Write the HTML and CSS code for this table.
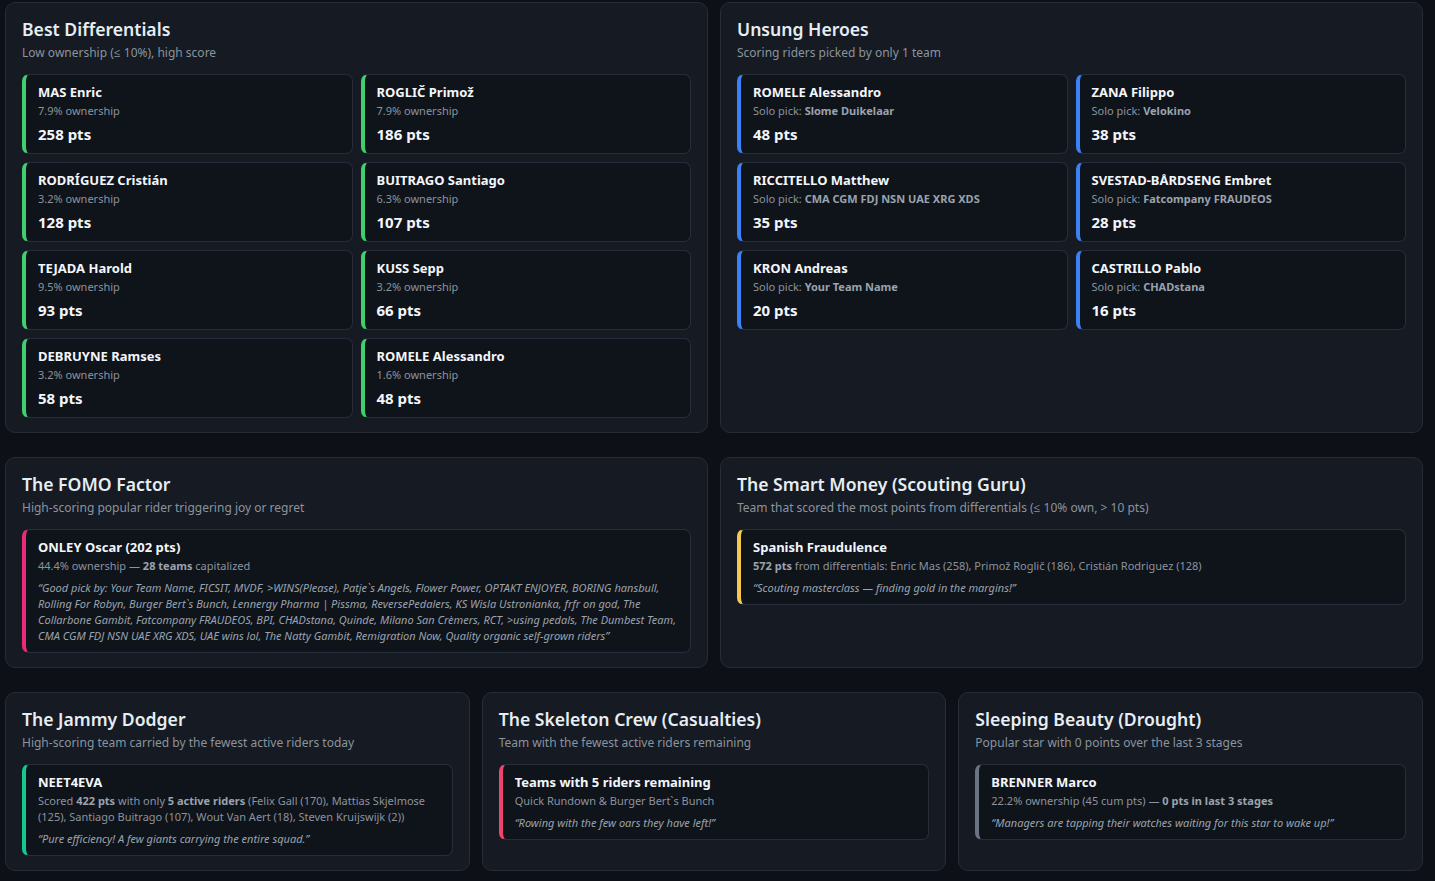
FILE: index.html
```html
<!DOCTYPE html>
<html lang="en">
<head>
<meta charset="utf-8">
<title>Awards</title>
<link rel="stylesheet" href="styles.css">
</head>
<body>
<div class="page">
  <div class="row row-2">
    <section class="panel">
      <h2 class="panel-title">Best Differentials</h2>
      <p class="panel-sub">Low ownership (≤ 10%), high score</p>
      <div class="cards">
        <div class="card c-green"><div class="card-name">MAS Enric</div><div class="card-meta">7.9% ownership</div><div class="card-pts">258 pts</div></div>
        <div class="card c-green"><div class="card-name">ROGLIČ Primož</div><div class="card-meta">7.9% ownership</div><div class="card-pts">186 pts</div></div>
        <div class="card c-green"><div class="card-name">RODRÍGUEZ Cristián</div><div class="card-meta">3.2% ownership</div><div class="card-pts">128 pts</div></div>
        <div class="card c-green"><div class="card-name">BUITRAGO Santiago</div><div class="card-meta">6.3% ownership</div><div class="card-pts">107 pts</div></div>
        <div class="card c-green"><div class="card-name">TEJADA Harold</div><div class="card-meta">9.5% ownership</div><div class="card-pts">93 pts</div></div>
        <div class="card c-green"><div class="card-name">KUSS Sepp</div><div class="card-meta">3.2% ownership</div><div class="card-pts">66 pts</div></div>
        <div class="card c-green"><div class="card-name">DEBRUYNE Ramses</div><div class="card-meta">3.2% ownership</div><div class="card-pts">58 pts</div></div>
        <div class="card c-green"><div class="card-name">ROMELE Alessandro</div><div class="card-meta">1.6% ownership</div><div class="card-pts">48 pts</div></div>
      </div>
    </section>
    <section class="panel">
      <h2 class="panel-title">Unsung Heroes</h2>
      <p class="panel-sub">Scoring riders picked by only 1 team</p>
      <div class="cards">
        <div class="card c-blue"><div class="card-name">ROMELE Alessandro</div><div class="card-meta">Solo pick: <b>Slome Duikelaar</b></div><div class="card-pts">48 pts</div></div>
        <div class="card c-blue"><div class="card-name">ZANA Filippo</div><div class="card-meta">Solo pick: <b>Velokino</b></div><div class="card-pts">38 pts</div></div>
        <div class="card c-blue"><div class="card-name">RICCITELLO Matthew</div><div class="card-meta">Solo pick: <b>CMA CGM FDJ NSN UAE XRG XDS</b></div><div class="card-pts">35 pts</div></div>
        <div class="card c-blue"><div class="card-name">SVESTAD-BÅRDSENG Embret</div><div class="card-meta">Solo pick: <b>Fatcompany FRAUDEOS</b></div><div class="card-pts">28 pts</div></div>
        <div class="card c-blue"><div class="card-name">KRON Andreas</div><div class="card-meta">Solo pick: <b>Your Team Name</b></div><div class="card-pts">20 pts</div></div>
        <div class="card c-blue"><div class="card-name">CASTRILLO Pablo</div><div class="card-meta">Solo pick: <b>CHADstana</b></div><div class="card-pts">16 pts</div></div>
      </div>
    </section>
  </div>

  <div class="row row-2">
    <section class="panel">
      <h2 class="panel-title">The FOMO Factor</h2>
      <p class="panel-sub">High-scoring popular rider triggering joy or regret</p>
      <div class="card c-pink">
        <div class="card-name">ONLEY Oscar (202 pts)</div>
        <div class="card-meta">44.4% ownership — <b>28 teams</b> capitalized</div>
        <div class="card-quote">“Good pick by: Your Team Name, FICSIT, MVDF, &gt;WINS(Please), Patje`s Angels, Flower Power, OPTAKT ENJOYER, BORING hansbull, Rolling For Robyn, Burger Bert`s Bunch, Lennergy Pharma | Pissma, ReversePedalers, KS Wisla Ustronianka, frfr on god, The Collarbone Gambit, Fatcompany FRAUDEOS, BPI, CHADstana, Quinde, Milano San Crèmers, RCT, &gt;using pedals, The Dumbest Team, CMA CGM FDJ NSN UAE XRG XDS, UAE wins lol, The Natty Gambit, Remigration Now, Quality organic self-grown riders”</div>
      </div>
    </section>
    <section class="panel">
      <h2 class="panel-title">The Smart Money (Scouting Guru)</h2>
      <p class="panel-sub">Team that scored the most points from differentials (≤ 10% own, &gt; 10 pts)</p>
      <div class="card c-yellow">
        <div class="card-name">Spanish Fraudulence</div>
        <div class="card-meta"><b>572 pts</b> from differentials: Enric Mas (258), Primož Roglič (186), Cristián Rodriguez (128)</div>
        <div class="card-quote">“Scouting masterclass — finding gold in the margins!”</div>
      </div>
    </section>
  </div>

  <div class="row row-3">
    <section class="panel">
      <h2 class="panel-title">The Jammy Dodger</h2>
      <p class="panel-sub">High-scoring team carried by the fewest active riders today</p>
      <div class="card c-teal">
        <div class="card-name">NEET4EVA</div>
        <div class="card-meta">Scored <b>422 pts</b> with only <b>5 active riders</b> (Felix Gall (170), Mattias Skjelmose (125), Santiago Buitrago (107), Wout Van Aert (18), Steven Kruijswijk (2))</div>
        <div class="card-quote">“Pure efficiency! A few giants carrying the entire squad.”</div>
      </div>
    </section>
    <section class="panel">
      <h2 class="panel-title">The Skeleton Crew (Casualties)</h2>
      <p class="panel-sub">Team with the fewest active riders remaining</p>
      <div class="card c-rose">
        <div class="card-name">Teams with 5 riders remaining</div>
        <div class="card-meta">Quick Rundown &amp; Burger Bert`s Bunch</div>
        <div class="card-quote">“Rowing with the few oars they have left!”</div>
      </div>
    </section>
    <section class="panel">
      <h2 class="panel-title">Sleeping Beauty (Drought)</h2>
      <p class="panel-sub">Popular star with 0 points over the last 3 stages</p>
      <div class="card c-gray">
        <div class="card-name">BRENNER Marco</div>
        <div class="card-meta">22.2% ownership (45 cum pts) — <b>0 pts in last 3 stages</b></div>
        <div class="card-quote">“Managers are tapping their watches waiting for this star to wake up!”</div>
      </div>
    </section>
  </div>
</div>
</body>
</html>
```

FILE: styles.css
```css
* {
  box-sizing: border-box;
}

html, body {
  margin: 0;
  background: #0d1016;
}

body {
  font-family: "Noto Sans", "Open Sans", sans-serif;
  color: #e6edf3;
  padding: 2px 12px 0 5px;
}

.page {
  display: flex;
  flex-direction: column;
  gap: 24px;
}

.row {
  display: grid;
  gap: 12px;
  align-items: stretch;
}

.row-2 {
  grid-template-columns: 1fr 1fr;
}

.row-3 {
  grid-template-columns: 1fr 1fr 1fr;
}

.panel {
  background: #151a23;
  border: 1px solid #262d39;
  border-radius: 10px;
  padding: 14px 16px;
}

.panel-title {
  margin: 0;
  font-size: 17.6px;
  line-height: 24px;
  font-weight: 600;
  color: #e6edf3;
}

.panel-sub {
  margin: 3px 0 12px;
  font-size: 12px;
  line-height: 18px;
  color: #8b949e;
}

.cards {
  display: grid;
  grid-template-columns: 1fr 1fr;
  gap: 8px;
}

.card {
  background: #0f131a;
  border: 1px solid #272e3a;
  border-left: 4px solid #3fcf6e;
  border-radius: 7px;
  padding: 8px 12px 8px 12px;
}

.card-name {
  font-size: 13px;
  line-height: 18px;
  font-weight: 700;
  color: #f3f6fa;
}

.card-meta {
  margin-top: 2px;
  font-size: 11px;
  line-height: 16px;
  color: #8b949e;
}

.card-meta b {
  font-weight: 700;
  color: #9aa3ae;
}

.card-pts {
  margin-top: 5px;
  font-size: 15px;
  line-height: 21px;
  font-weight: 700;
  color: #f3f6fa;
}

.card-quote {
  margin-top: 6px;
  font-size: 11px;
  line-height: 16px;
  font-style: italic;
  color: #9aa3ae;
}

.c-green { border-left-color: #3fcf6e; }
.c-blue { border-left-color: #3b82f6; }
.c-pink { border-left-color: #ec2a7a; }
.c-yellow { border-left-color: #f6c84e; }
.c-teal { border-left-color: #14c98f; }
.c-rose { border-left-color: #f0456a; }
.c-gray { border-left-color: #6b7482; }
```
